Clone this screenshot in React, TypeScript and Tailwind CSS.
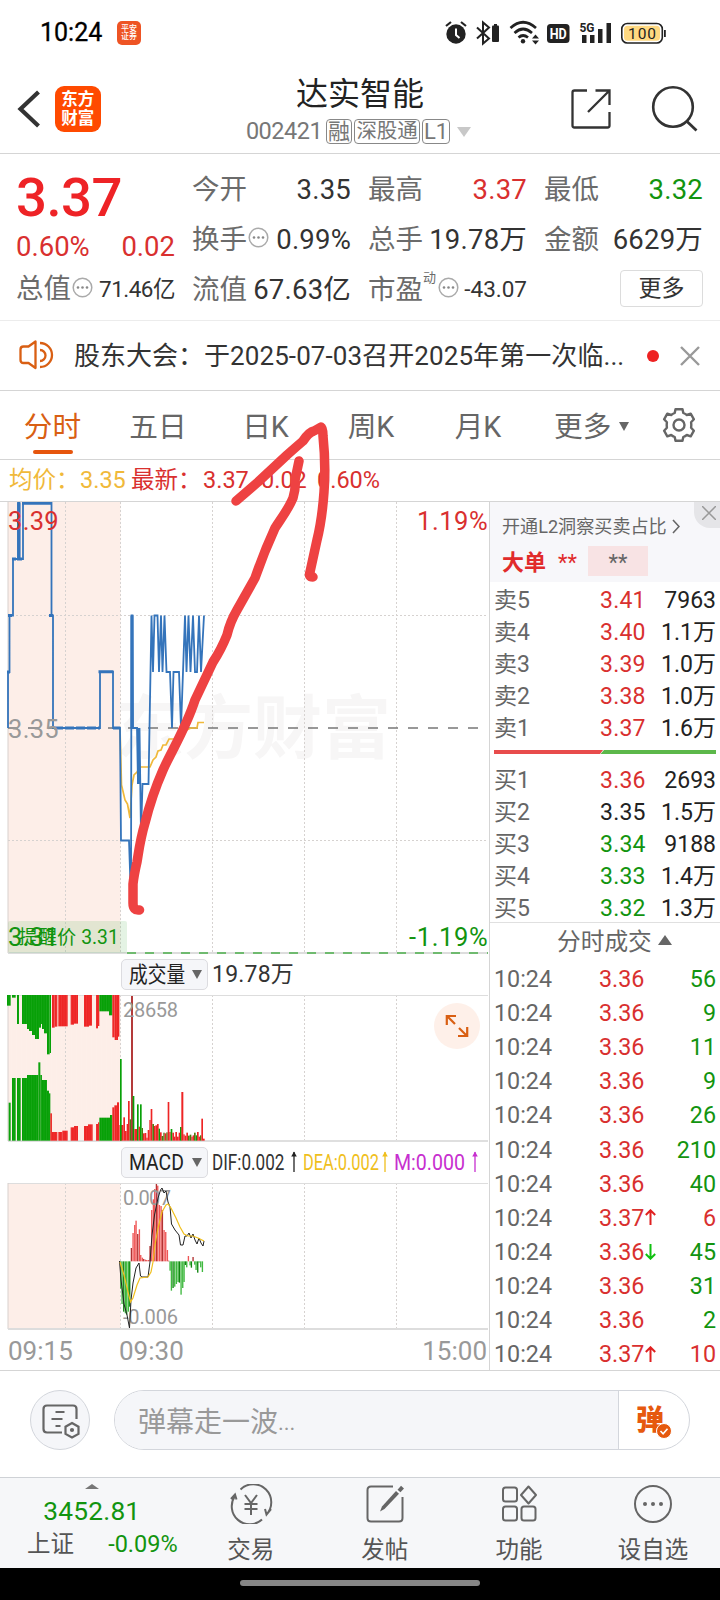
import React from "react";

const RED = "#d9302f";
const GREEN = "#12940f";

type Bar = [x: number, w: number, v: number, c: string];

const R = "#ee2525";
const G = "#07a007";
const D = "#b43a3a";
const O = "#4f7a10";

const topBars: Bar[] = [
  [21, 11, 77, G], [36, 11, 53, G], [51, 6, 132, G], [66, 15, 132, G], [81, 6, 147, G], [87, 9, 153, G], [96, 9, 165, G],
  [105, 12, 177, G], [117, 6, 143, G], [123, 3, 132, G], [126, 6, 147, G], [132, 9, 160, G], [141, 8, 223, G], [149, 4, 219, G],
  [156, 8, 143, R], [164, 8, 140, R], [175, 28, 139, R], [212, 10, 134, R], [222, 12, 131, R], [252, 15, 140, R], [267, 9, 137, R],
  [288, 6, 145, R], [294, 4, 138, R], [298, 29, 94, G], [327, 10, 106, G], [337, 7, 172, R], [344, 10, 180, R], [354, 4, 170, R],
];

const lowBars: Bar[] = [
  [26, 6, 368, G], [36, 11, 294, G], [51, 11, 294, G], [66, 15, 294, G], [81, 34, 285, G], [115, 6, 247, G], [121, 5, 285, G],
  [126, 15, 300, G], [141, 6, 332, G], [147, 4, 340, G], [151, 5, 400, R], [156, 16, 456, R], [175, 12, 456, R], [187, 16, 452, R],
  [212, 10, 442, R], [222, 12, 438, R], [252, 12, 438, R], [264, 14, 433, R], [288, 6, 432, R], [294, 4, 427, R], [298, 32, 413, G],
  [330, 7, 405, G], [337, 6, 382, R], [343, 8, 376, R], [351, 6, 367, R], [358, 12, 435, R], [360, 5, 237, G], [370, 5, 412, R],
  [375, 5, 453, R], [380, 4, 432, R], [384, 5, 363, R], [389, 5, 418, O], [393, 6, 48, D], [398, 5, 348, G], [403, 8, 447, R],
  [411, 5, 373, G], [416, 4, 440, R], [420, 5, 373, G], [425, 4, 444, O], [429, 5, 460, R], [434, 5, 459, R], [439, 4, 473, R],
  [443, 5, 450, R], [448, 4, 420, R], [452, 5, 387, R], [457, 5, 432, O], [462, 4, 438, R], [466, 5, 436, R], [471, 5, 432, R],
  [476, 4, 446, G], [480, 5, 457, R], [485, 5, 468, O], [490, 4, 458, O], [494, 5, 460, R], [499, 4, 457, O], [503, 5, 366, R],
  [508, 4, 456, R], [512, 5, 447, G], [517, 5, 458, R], [522, 4, 470, R], [526, 5, 456, R], [531, 5, 470, R], [536, 4, 458, R],
  [540, 5, 441, G], [544, 6, 336, R], [550, 4, 463, R], [554, 5, 467, R], [559, 5, 458, R], [564, 5, 467, O], [569, 5, 464, O],
  [574, 4, 470, R], [578, 4, 466, R], [582, 5, 458, O], [587, 4, 466, G], [591, 5, 456, R], [596, 4, 470, R], [600, 4, 466, O],
  [604, 5, 416, R], [609, 5, 476, R],
];

const macdBars: [number, number][] = [
  [362, 446], [366, 492], [371, 515], [376, 520], [380, 524], [385, 515], [389, 500], [394, 324], [399, 279], [404, 255], [408, 242],
  [413, 282], [418, 268], [422, 345], [427, 353], [431, 357], [436, 359], [440, 360], [445, 360], [450, 318], [455, 210], [460, 178],
  [464, 147], [469, 132], [473, 137], [478, 195], [483, 198], [487, 210], [492, 270], [497, 276], [502, 330], [506, 362], [510, 392],
  [514, 452], [519, 444], [524, 440], [529, 432], [534, 426], [538, 428], [543, 464], [548, 444], [552, 426], [556, 375], [560, 382],
  [565, 348], [570, 376], [574, 383], [579, 351], [584, 374], [588, 390], [593, 398], [597, 368], [602, 382], [607, 396],
];

const VLines = ({ top, bottom }: { top: number; bottom: number }) => (
  <g stroke="#d6d2d0" strokeWidth="1" strokeDasharray="2 2">
    {[65.5, 120.5, 212.5, 304.5, 396.5].map((x) => (
      <line key={x} x1={x} x2={x} y1={top} y2={bottom} />
    ))}
  </g>
);

const Dots = () => (
  <svg width="21" height="21" viewBox="0 0 21 21" className="mb-1 ml-px shrink-0">
    <circle cx="10.5" cy="10.5" r="9.3" fill="none" stroke="#aaa" strokeWidth="1.5" />
    <g fill="#888">
      <circle cx="6" cy="10.5" r="1.3" />
      <circle cx="10.5" cy="10.5" r="1.3" />
      <circle cx="15" cy="10.5" r="1.3" />
    </g>
  </svg>
);

const Quote = ({ label, value, color = "text-[#333]", dots }: { label: string; value: string; color?: string; dots?: boolean }) => (
  <div className="flex w-[159px] items-center">
    <span className="text-[27.5px] text-[#6b6b6b]">{label}</span>
    {dots && <Dots />}
    <span className={"ml-auto text-[27.5px] tracking-[0.2px] " + color}>{value}</span>
  </div>
);

const sells = [["卖5", "3.41", "7963"], ["卖4", "3.40", "1.1万"], ["卖3", "3.39", "1.0万"], ["卖2", "3.38", "1.0万"], ["卖1", "3.37", "1.6万"]];
const buys = [["买1", "3.36", "2693"], ["买2", "3.35", "1.5万"], ["买3", "3.34", "9188"], ["买4", "3.33", "1.4万"], ["买5", "3.32", "1.3万"]];
const trades: [string, string, string?][] = [
  ["3.36", "56"], ["3.36", "9"], ["3.36", "11"], ["3.36", "9"], ["3.36", "26"], ["3.36", "210"], ["3.36", "40"],
  ["3.37", "6", "up"], ["3.36", "45", "down"], ["3.36", "31"], ["3.36", "2"], ["3.37", "10", "up"],
];

const priceColor = (p: string) => (p > "3.35" ? "text-[#d9302f]" : p < "3.35" ? "text-[#12940f]" : "text-[#222]");

const Level = ({ row }: { row: string[] }) => (
  <div className="flex h-[32.1px] items-center text-[23px]">
    <span className="w-[106px] text-[#666]">{row[0]}</span>
    <span className={"tracking-[0.2px] " + priceColor(row[1])}>{row[1]}</span>
    <span className="ml-auto text-[#222]">{row[2]}</span>
  </div>
);

const UpArrow = ({ color }: { color: string }) => (
  <svg width="8" height="24" viewBox="0 0 8 24" fill="none" stroke={color} strokeWidth="1.3">
    <path d="M4 22V2" />
    <path d="M1.200 6.500L4 1.500l2.800 5z" fill={color} stroke="none" />
  </svg>
);

const NavItem = ({ label, children }: { label: string; children: React.ReactNode }) => (
  <div className="flex w-[134.300px] flex-col items-center pt-[6px]">
    <svg width="44" height="40" viewBox="0 0 44 40" fill="none" stroke="#666" strokeWidth="2">{children}</svg>
    <span className="mt-[15px] text-[23.500px] text-[#555]">{label}</span>
  </div>
);

export default function App() {
  return (
    <div className="relative flex h-[1600px] w-[720px] flex-col overflow-hidden bg-white font-['Roboto','Noto_Sans_CJK_SC',sans-serif] leading-none whitespace-nowrap">
      {/* status bar */}
      <div className="flex h-16 shrink-0 items-center pt-px pl-[40px]">
        <span className="w-[63px] text-[25px] text-black [-webkit-text-stroke:0.3px_black]">10:24</span>
        <div className="ml-[14px] flex size-[24px] flex-col items-center justify-center rounded-[5px] bg-[#ee5424] text-[8px] leading-[8px] font-medium text-white">
          <span>平安</span>
          <span>证券</span>
        </div>
        <svg className="mr-[52px] ml-auto" width="224" height="30" viewBox="444 17 224 30" fill="#222">
          <circle cx="456" cy="33" r="9.700" />
          <path d="M446 25l5-4M466 25l-5-4" stroke="#222" strokeWidth="2.200" />
          <path d="M456 27.500v6.500l3.500 3" stroke="#fff" strokeWidth="2" fill="none" />
          <path d="M477 26.500l12 11-6 5V21.500l6 5-12 11" fill="none" stroke="#222" strokeWidth="2" />
          <rect x="492" y="24.500" width="7" height="16.500" rx="1" />
          <rect x="494" y="23" width="3" height="3" />
          <g fill="none" stroke="#222" strokeWidth="2.700">
            <path d="M510.500 27q12.500-11.500 25.500 0" />
            <path d="M514.500 32q8.500-8 17.500 0" />
            <path d="M518.500 36.500q4.500-4 9.500 0" />
          </g>
          <circle cx="523" cy="40.300" r="2.200" />
          <path d="M532 37.500l3.500-4 3.500 4zM532 39.500l3.500 4 3.500-4z" />
          <rect x="547" y="23" width="22.500" height="19" rx="3.500" />
          <text x="558.200" y="38" fontSize="15" fontWeight="700" fill="#fff" textAnchor="middle" textLength="17" lengthAdjust="spacingAndGlyphs">HD</text>
          <text x="579.500" y="30.500" fontSize="13.500" fontWeight="700" textLength="15" lengthAdjust="spacingAndGlyphs">5G</text>
          <path d="M582 34h4.500v8h-4.500zM590 34h4.500v8h-4.500zM598 28h4.500v14h-4.500zM606.500 22h4.500v20h-4.500z" />
          <rect x="621.800" y="22.500" width="40.500" height="19.500" rx="5.500" fill="#fff" stroke="#222" strokeWidth="1.600" />
          <rect x="624" y="24.700" width="36" height="15" rx="3.500" fill="#ffd981" />
          <path d="M664 29h1.800v7h-1.800z" />
          <text x="642" y="37.800" fontSize="15.500" textAnchor="middle" textLength="28" lengthAdjust="spacing">100</text>
        </svg>
      </div>

      {/* title bar */}
      <div className="flex h-[90px] shrink-0 border-b border-[#d5d5d5]">
        <svg width="55" height="89" viewBox="0 64 55 89" className="shrink-0">
          <path d="M38.500 92L20.500 109l18 17" fill="none" stroke="#333" strokeWidth="4.200" />
        </svg>
        <div className="mt-[22px] flex size-[45.500px] shrink-0 flex-col items-center justify-center rounded-[9px] bg-[#ff4a00] text-[16.500px] leading-[19px] font-bold text-white">
          <span>东方</span>
          <span>财富</span>
        </div>
        <div className="flex w-[519px] shrink-0 flex-col items-center pt-[14px]">
          <span className="text-[32px] text-[#222]">达实智能</span>
          <div className="mt-[9px] flex items-center gap-[2px] pr-[3px] text-[22px] text-[#777]">
            <span className="mr-[2px] text-[23.500px] tracking-[-0.500px]">002421</span>
            <span className="flex h-[25px] w-[26px] items-center justify-center rounded-[4px] border border-[#888]">融</span>
            <span className="flex h-[25px] w-[66px] items-center justify-center rounded-[4px] border border-[#888] text-[20.500px]">深股通</span>
            <span className="flex h-[25px] w-[28px] items-center justify-center rounded-[4px] border border-[#888]">L1</span>
            <svg width="14" height="10" className="ml-[5px]"><path d="M0 0h14L7 10z" fill="#c8c8c8" /></svg>
          </div>
        </div>
        <svg width="150" height="89" viewBox="560 64 150 89" className="-ml-[59.500px] shrink-0" fill="none" stroke="#333" strokeWidth="2.300">
          <path d="M587 90.500h-12.500q-2 0-2 2v33q0 2 2 2h33q2 0 2-2V112M588 112l21-21M595.500 90.500h14V105" />
          <circle cx="673" cy="107" r="19.800" strokeWidth="2.600" />
          <path d="M686.500 121l10 9.500" strokeWidth="2.800" />
        </svg>
      </div>

      {/* quote summary */}
      <div className="flex h-[167px] shrink-0 border-b border-[#ececec] pl-[16px]">
        <div className="w-[159px]">
          <div className="mt-[15px] h-[55px] text-[54.500px] leading-[56px] font-medium tracking-[-0.500px] text-[#ee2326]">3.37</div>
          <div className="mt-[9px] flex h-[28px] items-center justify-between text-[27.500px] text-[#d9302f]">
            <span>0.60%</span>
            <span>0.02</span>
          </div>
          <div className="mt-[14px] flex h-[28px] items-center">
            <span className="text-[27.500px] text-[#6b6b6b]">总值</span>
            <Dots />
            <span className="ml-auto text-[22.500px] tracking-[-0.500px] text-[#333]">71.46亿</span>
          </div>
        </div>
        <div className="ml-[17px] mt-[21px] grid grid-cols-[159px_159px_159px] grid-rows-[29px_29px_29px] content-start items-center gap-x-[17px] gap-y-[21px]">
          <Quote label="今开" value="3.35" />
          <Quote label="最高" value="3.37" color="text-[#d9302f]" />
          <Quote label="最低" value="3.32" color="text-[#12940f]" />
          <Quote label="换手" value="0.99%" dots />
          <Quote label="总手" value="19.78万" />
          <Quote label="金额" value="6629万" />
          <Quote label="流值" value="67.63亿" />
          <div className="flex items-center">
            <span className="text-[27.500px] text-[#6b6b6b]">市盈</span>
            <span className="mb-[24px] w-[14px] text-[13px] text-[#6b6b6b]">动</span>
            <Dots />
            <span className="ml-auto text-[22.500px] text-[#333]">-43.07</span>
          </div>
          <div className="-mt-[3px] ml-auto flex h-[37px] w-[83px] items-center justify-center rounded-[4px] border border-[#dcdcdc] text-[23px] text-[#333]">更多</div>
        </div>
      </div>

      {/* notice */}
      <div className="flex h-[70px] shrink-0 items-center border-b border-[#d5d5d5] pl-[19px] text-[26px] text-[#333]">
        <svg width="36" height="30" viewBox="19 340 36 30" className="-mt-[2px]" fill="none" stroke="#d95f13" strokeWidth="2.300">
          <path d="M35.500 341.500v26.500l-7-5h-5q-3 0-3-3v-10.500q0-3 3-3h5z" strokeLinejoin="round" />
          <path d="M40 343a12 12 0 0 1 0 24M40 350a5.500 5.500 0 0 1 0 11" />
        </svg>
        <span className="ml-[19px]">股东大会：</span>
        <span className="w-[419px] tracking-[0.080px]">于2025-07-03召开2025年第一次临...</span>
        <span className="ml-[24px] size-[12px] rounded-full bg-[#ee2222]" />
        <svg width="20" height="20" className="ml-[21px]" stroke="#999" strokeWidth="2.400"><path d="M1 1l18 18M19 1L1 19" /></svg>
      </div>

      {/* period tabs */}
      <div className="flex h-[69px] shrink-0 border-b border-[#d5d5d5] pt-[22px] text-[28.700px] text-[#666]">
        <div className="flex w-[105px] flex-col items-center text-[#d95f13]">
          <span>分时</span>
          <span className="mt-[8px] h-[4px] w-[40px] rounded-full bg-[#e6550d]" />
        </div>
        <div className="w-[106px] text-center">五日</div>
        <div className="w-[109px] text-center">日K</div>
        <div className="w-[102px] text-center">周K</div>
        <div className="w-[112px] text-center">月K</div>
        <div className="ml-[20px] flex h-[29px] items-center">
          更多
          <svg width="10" height="9" className="mb-[3px] ml-[8px]"><path d="M0 0h10L5 9z" fill="#666" /></svg>
        </div>
        <svg width="36" height="36" viewBox="0 0 36 36" className="-mt-[6px] ml-[32px]" fill="none" stroke="#666" strokeWidth="2.400" strokeLinejoin="round">
          <path d="M14.500 2.200h7l.8 3.800q2 .8 3.500 2l3.900-1.300 3.200 5.600-2.800 3q.4 2.700 0 5.400l2.800 3-3.200 5.600-3.900-1.300q-1.500 1.200-3.500 2l-.8 3.800h-7l-.8-3.800q-2-.8-3.500-2l-3.900 1.300-3.200-5.600 2.800-3q-.4-2.700 0-5.400l-2.800-3 3.200-5.600 3.900 1.300q1.500-1.200 3.500-2z" />
          <circle cx="18" cy="18" r="5.500" />
        </svg>
      </div>

      {/* averages */}
      <div className="flex h-[42px] shrink-0 items-center border-b border-[#d5d5d5] pt-px pl-[9px] text-[23.500px] text-[#d9302f]">
        <span className="w-[71px] text-[#f0b93a]">均价：</span>
        <span className="w-[51px] text-[#f0b93a]">3.35</span>
        <span className="w-[72px]">最新：</span>
        <span className="w-[58px]">3.37</span>
        <span className="w-[56px]">0.02</span>
        <span>0.60%</span>
      </div>

      {/* charts and order book */}
      <div className="flex h-[869px] shrink-0 border-b border-[#d5d5d5]">
        <div className="flex w-[490px] shrink-0 flex-col border-r border-[#d5d5d5]">
          <svg width="489" height="453" viewBox="0 502 489 453" className="shrink-0">
            <rect x="8" y="502" width="112.500" height="451" fill="#fdeee8" />
            <text x="115" y="753" fontSize="69" fontWeight="700" fill="#f7f6f6">东方财富</text>
            <VLines top={502} bottom={953} />
            <g stroke="#d6d2d0" strokeDasharray="2 2">
              <path d="M8 615.500H488M8 840.500H488" />
            </g>
            <path d="M8 502V953" stroke="#d8d0cd" />
            <path d="M8 953H488" stroke="#ddd" strokeWidth="2" />
            <path d="M8 728H479" stroke="#777" strokeWidth="1.600" strokeDasharray="10 10" />
            <path d="M127 953H488" stroke="#6fba6f" strokeWidth="2" strokeDasharray="9 9" />
            <path d="M120 728L121.500 785 125 800 127.500 804 130 818 132 785 134 775 137 772 140 767H150L153 760 156 757 158 751 161 750 163 745 166 745 169 739H176L182 732 191 728H197L198 722.500H204" fill="none" stroke="#f0b93a" strokeWidth="1.700" />
            <g fill="none" stroke="#3474bb" strokeWidth="1.800">
              <path d="M8 728V672H9.500V615.500H13V559H18V503H19.500V559H23V503H51.500V615.500H53V728H100V672H113V728H120L121 840.500H129L131 900 131.500 615.500H132.500L133 728H137L138 784 139.500 728 141 835 142.500 784H148.500L150.500 672 151.500 615.500 153 672 154.500 615.500H157.500L159 672 161 615.500 162.500 672 164.500 615.500 166.500 672H170L172 728 173.500 672H179L181 728 183 672 185 615.500 186.500 672 188.500 615.500 190.500 672 193 615.500 195 672H197L199 615.500 201 672 204 615.500" />
              <path d="M18.800 503V559M132 615.500V728M138.500 728V784" strokeWidth="3" />
              <path d="M22 503.300H51M98.500 671.700H113.500M12 559H16M17 559H22M7 672H10M8 615.500H12M49 615.500H53M113 728H120" strokeWidth="3" />
              <path d="M54 728H100" strokeWidth="3" strokeDasharray="9 2" />
            </g>
            <rect x="8" y="921" width="119" height="32" rx="2" fill="#5cb85c" fillOpacity=".17" />
            <g fontSize="25.500" letterSpacing=".3">
              <text x="8" y="529.500" fill={RED}>3.39</text>
              <text x="488" y="529.500" fill={RED} textAnchor="end" textLength="71">1.19%</text>
              <text x="8" y="738" fill="#999">3.35</text>
              <text x="8" y="946" fill={GREEN}>3.31</text>
              <text x="488" y="946" fill={GREEN} textAnchor="end" textLength="79">-1.19%</text>
            </g>
            <text x="18.500" y="944" fontSize="19.300" fill={GREEN}>提醒价 3.31</text>
          </svg>

          <div className="flex h-[40px] shrink-0 items-center pb-px pl-[121px]">
            <div className="mr-[4px] flex h-[31px] w-[87px] items-center rounded-[5px] border border-[#dcdce0] bg-[#f5f6f9] pl-[7px] text-[22px] text-[#222]">
              <span className="w-[63px]"><span className="inline-block origin-left scale-x-[.85]">成交量</span></span>
              <svg width="10" height="9"><path d="M0 0h10L5 9z" fill="#666" /></svg>
            </div>
            <span className="text-[23px] tracking-[0.200px] text-[#333]">19.78万</span>
          </div>

          <svg width="489" height="147" viewBox="0 995 489 147" className="shrink-0">
            <rect x="8" y="995" width="112.500" height="145.500" fill="#fdeee8" />
            <VLines top={995} bottom={1140} />
            <path d="M8 995.500H488" stroke="#ddd" />
            <path d="M8 995V1141" stroke="#d8d0cd" />
            <path d="M8 1141H488" stroke="#d5d5d5" strokeWidth="1.500" />
            {topBars.map(([x, w, v, c], i) => (
              <rect key={i} x={x / 3} y="995" width={w / 3} height={(v - 45) / 3} fill={c} />
            ))}
            {lowBars.map(([x, w, v, c], i) => (
              <rect key={i} x={x / 3} y={980 + v / 3} width={w / 3} height={(482 - v) / 3} fill={c} />
            ))}
            <g stroke="#fff" strokeOpacity=".1" strokeWidth=".6">
              {Array.from({ length: 44 }, (_, i) => (
                <path key={i} d={`M${9 + i * 2.5} 995v145`} />
              ))}
            </g>
            <text x="123" y="1016.800" fontSize="20" fill="#999" textLength="55">28658</text>
            <circle cx="457" cy="1026" r="23" fill="#fef0e9" />
            <path d="M455 1024l-8-8M446.800 1025V1016H456M459 1028l8 8M467.200 1027V1036H458" fill="none" stroke="#d95f13" strokeWidth="2.200" />
          </svg>

          <div className="flex h-[41px] shrink-0 items-center pb-px pl-[121px] text-[22.500px]">
            <div className="mr-[4px] flex h-[31px] w-[87px] items-center rounded-[5px] border border-[#dcdce0] bg-[#f5f6f9] pl-[7px] text-[#222]">
              <span className="w-[63px]"><span className="inline-block origin-left scale-x-[.86]">MACD</span></span>
              <svg width="10" height="9"><path d="M0 0h10L5 9z" fill="#666" /></svg>
            </div>
            <span className="w-[78px] text-[#333]"><span className="inline-block origin-left scale-x-[.76]">DIF:0.002</span></span>
            <UpArrow color="#222" />
            <span className="ml-[5px] w-[78px] text-[#f0bf1c]"><span className="inline-block origin-left scale-x-[.73]">DEA:0.002</span></span>
            <UpArrow color="#f0bf1c" />
            <span className="ml-[5px] w-[77px] text-[#c72fcf]"><span className="inline-block origin-left scale-x-[.87]">M:0.000</span></span>
            <UpArrow color="#c72fcf" />
          </div>

          <svg width="489" height="147" viewBox="0 1183 489 147" className="shrink-0">
            <rect x="8" y="1183" width="112.500" height="145.500" fill="#fdeee8" />
            <VLines top={1183} bottom={1329} />
            <path d="M8 1183.500H488" stroke="#ddd" />
            <path d="M8 1183V1329" stroke="#d8d0cd" />
            <path d="M8 1329H488" stroke="#ddd" strokeWidth="2" />
            {macdBars.map(([x, v], i) => (
              <rect key={i} x={x / 3 - 0.6} y={1140 + Math.min(v, 364) / 3} width="1.350" height={Math.abs(v - 364) / 3} fill={v < 364 ? (i % 4 === 3 ? "#b23333" : "#ee5555") : i % 4 === 2 ? "#118511" : "#3fb83f"} />
            ))}
            <g fontSize="20" fill="#999">
              <text x="123" y="1205" textLength="48">0.007</text>
              <text x="123" y="1324" textLength="55">-0.006</text>
            </g>
            <path d="M119.500 1261L121 1280 124 1304 127 1315 129.500 1328 131 1300 133 1283 136 1268 139 1263 140.500 1276 142 1277H148L150 1262 152 1235 154.500 1215 158 1198 160.500 1190 162 1188 164 1193 166 1191 168 1202 170 1207 171.500 1224 175 1230 179 1235 180.500 1245H183L185 1236 187 1236 189 1233 191 1238 193 1234 195 1240 197 1244 199 1238 201 1243 203 1246 204 1241" fill="none" stroke="#222" strokeWidth="1" />
            <path d="M120 1262L124 1275 128 1292 130.500 1302 133 1298 137 1285 140 1278 148 1277 151 1272 153 1262 155 1245 158 1228 162 1212 166 1205 168 1204 171 1208 176 1218 180 1227 184 1234 188 1236 193 1236 198 1238 204 1241" fill="none" stroke="#f0bf1c" strokeWidth="1.200" />
          </svg>

          <div className="flex h-[40px] shrink-0 items-center pt-px pr-[2px] pl-[8px] text-[26px] text-[#999]">
            <span className="w-[111px]">09:15</span>
            <span>09:30</span>
            <span className="ml-auto">15:00</span>
          </div>
        </div>

        {/* order book */}
        <div className="flex flex-1 flex-col">
          <div className="relative h-[80px] shrink-0 bg-[#f7f7fa] pl-[12px]">
            <div className="absolute top-0 right-0 flex h-[26px] w-[26px] items-center justify-center rounded-bl-[16px] bg-[#e5e5e8] pb-[4px]">
              <svg width="14" height="14" className="ml-[3px]" stroke="#999" strokeWidth="1.500"><path d="M0 0l14 14M14 0L0 14" /></svg>
            </div>
            <div className="flex items-center pt-[16px] text-[18.100px] text-[#666]">
              开通L2洞察买卖占比
              <svg width="8" height="15" className="mb-[2px] ml-[5px]" fill="none" stroke="#666" strokeWidth="1.600"><path d="M1 1l6 6.500L1 14" /></svg>
            </div>
            <div className="mt-[10px] flex h-[30px] items-center">
              <span className="mt-[3px] text-[22px] font-bold text-[#e12b2b]">大单</span>
              <span className="mt-[4px] ml-[12px] text-[22px] text-[#e12b2b]">**</span>
              <span className="ml-[11px] flex h-[30px] w-[60px] items-center justify-center bg-[#f8e3e4] pt-[4px] text-[22px] text-[#666]">**</span>
            </div>
          </div>
          <div className="mt-[2px] shrink-0 pr-[4px] pl-[4px]">
            {sells.map((r) => <Level key={r[0]} row={r} />)}
          </div>
          <svg width="222" height="4" className="mt-[5.500px] mb-[10px] ml-[4px] shrink-0">
            <path d="M0 0h109l-3 4H0z" fill="#e84c4c" />
            <path d="M110 0h112v4H106.500z" fill="#5cb84a" />
          </svg>
          <div className="shrink-0 pr-[4px] pl-[4px]">
            {buys.map((r) => <Level key={r[0]} row={r} />)}
          </div>
          <div className="-mt-[2px] flex flex-1 flex-col border-t border-[#e0e0e0]">
            <div className="flex h-[39px] shrink-0 items-center pl-[67px] text-[23.700px] text-[#666]">
              分时成交
              <svg width="14" height="10" className="mb-[5px] ml-[6px]"><path d="M0 10h14L7 0z" fill="#666" /></svg>
            </div>
            {trades.map(([p, v, dir], i) => (
              <div key={i} className="flex h-[34.150px] shrink-0 items-center pr-[4px] pl-[4px] text-[23.300px]">
                <span className="w-[105px] text-[#666]">10:24</span>
                <span className="w-[46px] text-[#d9302f]">{p}</span>
                {dir && (
                  <svg width="11" height="17" viewBox="0 0 11 17" fill="none" stroke={dir === "up" ? "#e02020" : "#10c010"} strokeWidth="2" className={dir === "up" ? "mb-[2px]" : "mb-[2px] rotate-180"}>
                    <path d="M5.500 16V1.500M.8 6l4.700-4.700L10.200 6" />
                  </svg>
                )}
                <span className={"ml-auto " + (dir === "up" ? "text-[#d9302f]" : "text-[#12940f]")}>{v}</span>
              </div>
            ))}
          </div>
        </div>
      </div>

      {/* comment bar */}
      <div className="flex h-[107px] shrink-0 items-start border-b border-[#cfd2d6] pt-[19px] pl-[30px]">
        <div className="flex size-[60px] items-center justify-center rounded-full border border-[#d3d6dc] bg-[#f5f6f9]">
          <svg width="40" height="40" viewBox="40 1400 40 40" fill="none" stroke="#666" strokeWidth="2.200">
            <path d="M62 1432.500H47q-3.500 0-3.500-3.500v-20q0-3.500 3.500-3.500h26q3.500 0 3.500 3.500V1419M55.500 1412h9M51.500 1419h11M55.500 1426h5" />
            <path d="M72 1423l6.500 3.700v7.200L72 1437.500l-6.500-3.600v-7.200z" />
            <circle cx="72" cy="1430" r="1" />
          </svg>
        </div>
        <div className="ml-[24px] flex h-[60px] w-[576px] overflow-hidden rounded-full border border-[#d3d6dc]">
          <div className="flex w-[504px] items-center border-r border-[#d3d6dc] bg-[#f5f6f9] pt-[5px] pl-[23px] text-[28px] text-[#999]">
            弹幕走一波<span className="text-[22px]">...</span>
          </div>
          <div className="relative pt-[16px] pl-[17px] text-[28px] font-black text-[#e6590e]">
            弹
            <svg width="16" height="16" viewBox="0 0 16 16" className="absolute top-[32px] left-[37px]">
              <circle cx="8" cy="8" r="7.500" fill="#e6590e" stroke="#fff" />
              <path d="M4.500 8l2.600 2.700L11.500 5.700" fill="none" stroke="#fff" strokeWidth="1.600" />
            </svg>
          </div>
        </div>
      </div>

      {/* bottom navigation */}
      <div className="flex h-[90px] shrink-0 bg-[#f6f7f9]">
        <div className="flex w-[184px] flex-col items-center pt-[6px]">
          <svg width="14" height="5" className="shrink-0"><path d="M0 5h14L7 0z" fill="#777" /></svg>
          <span className="mt-[9px] text-[26.300px] tracking-[0.200px] text-[#12940f]">3452.81</span>
          <div className="mt-[9px] flex w-full items-center justify-between pr-[6px] pl-[27px] text-[23.500px]">
            <span className="text-[#555]">上证</span>
            <span className="text-[#12940f]">-0.09%</span>
          </div>
        </div>
        <NavItem label="交易">
          <path d="M11.500 5.500A18 18 0 0 1 37 31M33 35.500A18 18 0 0 1 6 12M2 15l4-4.500 1.500 5M42 25l-4.500 5.500-1.500-5.500M16 11l6 8 6-8M22 19v12M15.500 20h13M15.500 25h13" />
        </NavItem>
        <NavItem label="发帖">
          <path d="M30 2.500H8Q4.500 2.500 4.500 6v28q0 3.500 3.500 3.500h28q3.500 0 3.500-3.500V13" />
          <path d="M17 27.500l2-5L33 7l3 2.700L21.500 25z" fill="#666" stroke="none" />
          <path d="M36 7l3.500-3.800" strokeWidth="4" />
        </NavItem>
        <NavItem label="功能">
          <rect x="6" y="3.500" width="14" height="14" rx="2.500" />
          <rect x="6" y="22.500" width="14" height="14" rx="2.500" />
          <rect x="24.500" y="22.500" width="14" height="14" rx="2.500" />
          <path d="M31.500 2.500l7.500 8.500-7.500 8.500L24 11z" strokeLinejoin="round" />
        </NavItem>
        <NavItem label="设自选">
          <circle cx="22" cy="20" r="18" />
          <g fill="#666" stroke="none">
            <circle cx="14" cy="20" r="2" />
            <circle cx="22" cy="20" r="2" />
            <circle cx="30" cy="20" r="2" />
          </g>
        </NavItem>
      </div>
      <div className="flex flex-1 items-start justify-center bg-black pt-[12px]">
        <div className="h-[6px] w-[240px] rounded-full bg-[#868686]" />
      </div>

      {/* hand-drawn arrow */}
      <svg width="720" height="1600" viewBox="0 0 720 1600" className="pointer-events-none absolute inset-0" fill="none" stroke="#ee4242" strokeWidth="9.500" strokeLinecap="round" strokeLinejoin="round">
        <path d="M139.500 910Q133 911 133 903V884Q134 875 137 862C139 850 140 840 145 823Q152 795 163 770C172 750 186 728 195 700L213 662Q221 650 227 635Q230 622 237 610L255 578Q264 552 275 528C280 520 288 510 293 498Q296 488 295 480L299 461" />
        <path d="M236 501L258 482 287 455Q296 447 303 441 309 432 314 431L321 427Q323 428 323 436Q326 465 324 492Q322 520 317 540L310 572Q308 577 313 577" />
      </svg>
    </div>
  );
}
